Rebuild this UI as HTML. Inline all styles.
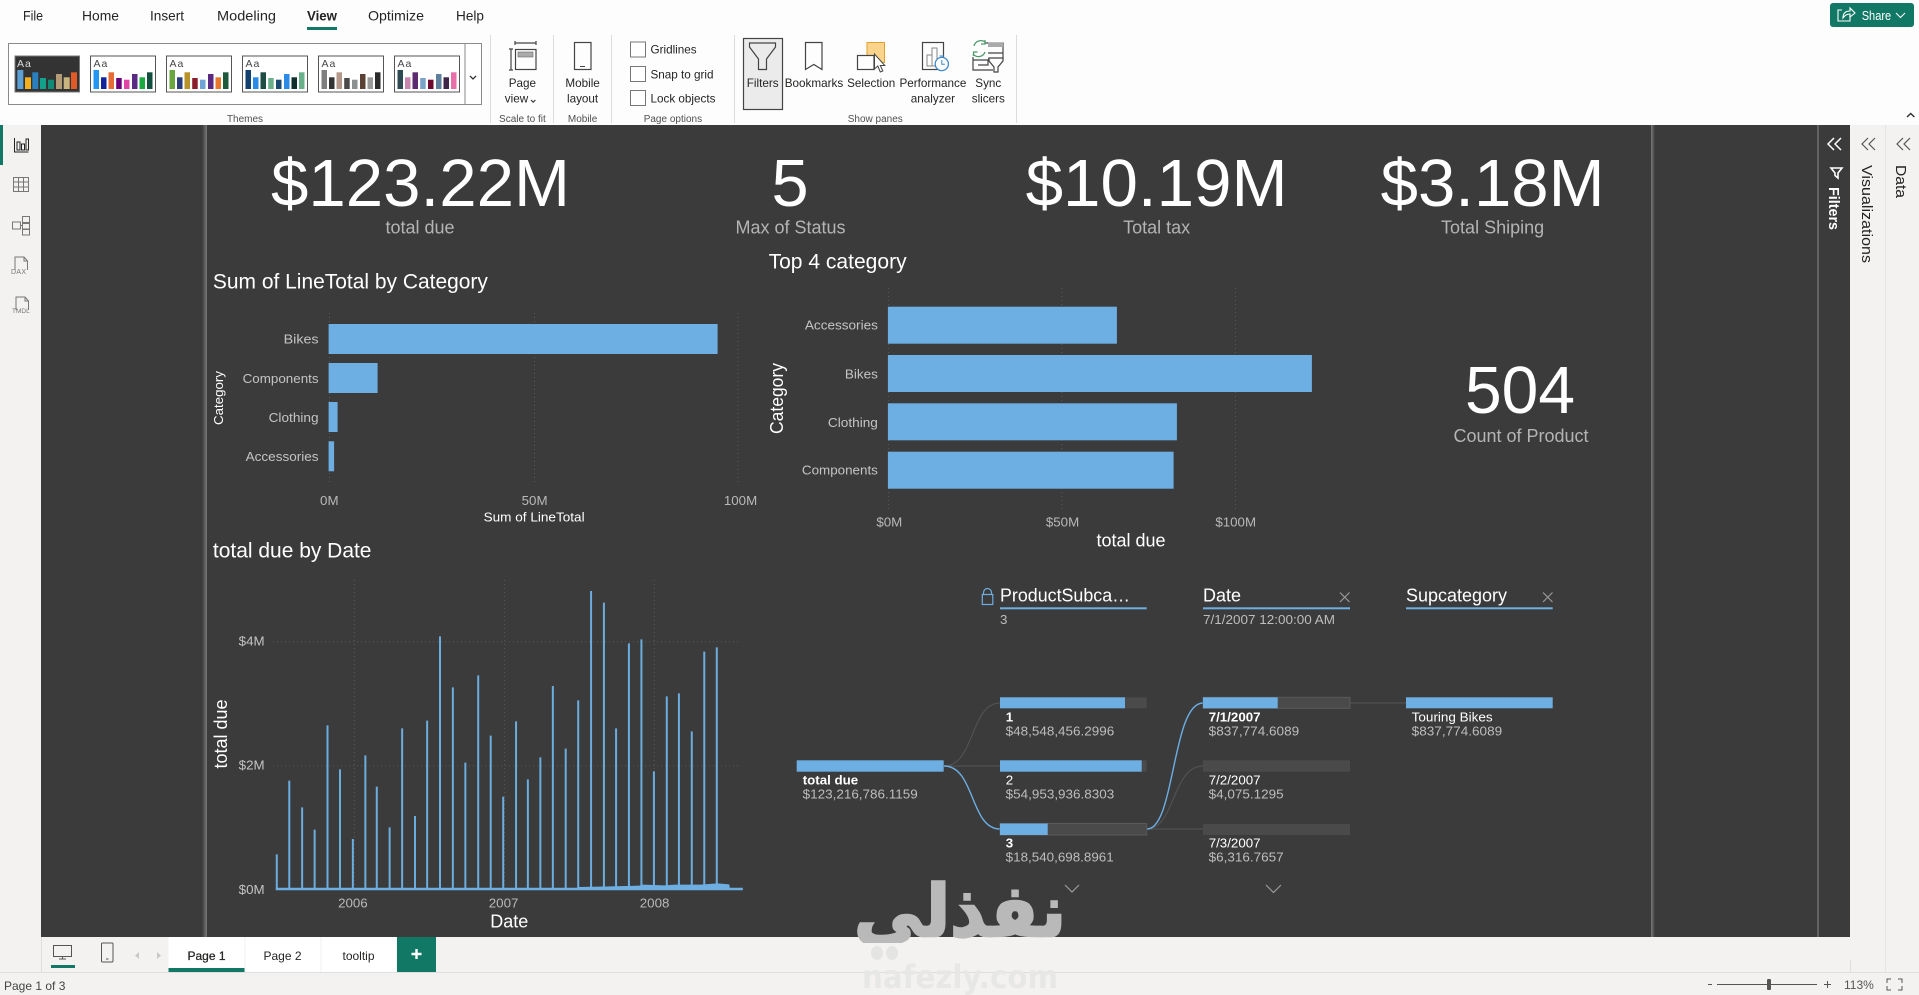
<!DOCTYPE html>
<html lang="en">
<head>
<meta charset="utf-8">
<title>Power BI Desktop - View</title>
<style>
html,body{margin:0;padding:0;background:#f3f2f1;overflow:hidden}
svg{display:block;font-family:"Liberation Sans",sans-serif}
.tab{font-size:14px;fill:#252423}
.rb{font-size:11.7px;fill:#252423;text-anchor:middle}
.gr{font-size:10px;fill:#505050;text-anchor:middle}
.ck{font-size:11.7px;fill:#252423}
.aa{font-size:10.5px;letter-spacing:1px}
.kpi{font-size:66.7px;fill:#fff;text-anchor:middle}
.kl{font-size:18px;fill:#b4b4b4;text-anchor:middle}
.ttl{font-size:20.8px;fill:#fff}
.ax{font-size:13.33px;fill:#b9b9b9}
.axm{font-size:13.33px;fill:#b9b9b9;text-anchor:middle}
.axe{font-size:13.33px;fill:#c4c4c4;text-anchor:end}
.at{font-size:18px;fill:#fff;text-anchor:middle}
.dh{font-size:18px;fill:#fff}
.ds{font-size:13.33px;fill:#bdbdbd}
.db{font-size:13.33px;fill:#fff;font-weight:bold}
.dn{font-size:13.33px;fill:#fff}
.grid{stroke:#5a5a5a;stroke-width:1;stroke-dasharray:1 3;fill:none}
.ic{fill:none;stroke:#444;stroke-width:1.2}
.pg{font-size:12px;fill:#252423;text-anchor:middle}
</style>
</head>
<body>
<svg width="1919" height="995" viewBox="0 0 1919 995" xmlns="http://www.w3.org/2000/svg">
<defs>
<linearGradient id="band" x1="0" x2="1" y1="0" y2="0"><stop offset="0" stop-color="#3b3b3b"/><stop offset="1" stop-color="#7a7a7a"/></linearGradient>
<linearGradient id="band2" x1="0" x2="1" y1="0" y2="0"><stop offset="0" stop-color="#7a7a7a"/><stop offset="1" stop-color="#3b3b3b"/></linearGradient>
<clipPath id="wm"><rect x="840" y="870" width="240" height="73"/></clipPath>
</defs>

<!-- backgrounds -->
<rect width="1919" height="125" fill="#fdfdfd"/>
<rect y="125" width="1919" height="870" fill="#f3f2f1"/>
<rect x="41" y="125" width="1809" height="812" fill="#3b3b3b"/>
<rect x="202" y="125" width="5" height="812" fill="url(#band)"/>
<rect x="1651" y="125" width="4" height="812" fill="url(#band2)"/>
<rect x="1817.5" y="125" width="1" height="812" fill="#8a8a8a"/>
<rect x="1885" y="125" width="1" height="847" fill="#e4e4e4"/>

<!-- ribbon tabs -->
<text class="tab" x="23" y="20.5" textLength="20" lengthAdjust="spacingAndGlyphs">File</text>
<text class="tab" x="82" y="20.5" textLength="37" lengthAdjust="spacingAndGlyphs">Home</text>
<text class="tab" x="150" y="20.5" textLength="34" lengthAdjust="spacingAndGlyphs">Insert</text>
<text class="tab" x="217" y="20.5" textLength="59" lengthAdjust="spacingAndGlyphs">Modeling</text>
<text class="tab" x="307" y="20.5" textLength="30" lengthAdjust="spacingAndGlyphs" font-weight="bold">View</text>
<rect x="307" y="27" width="30" height="3" fill="#117865"/>
<text class="tab" x="368" y="20.5" textLength="56" lengthAdjust="spacingAndGlyphs">Optimize</text>
<text class="tab" x="456" y="20.5" textLength="28" lengthAdjust="spacingAndGlyphs">Help</text>

<!-- themes gallery -->
<rect x="8.5" y="43.5" width="473" height="61" fill="#fff" stroke="#8a8a8a"/>
<line x1="465" y1="44" x2="465" y2="104" stroke="#8a8a8a"/>
<path d="M470 76l3 3 3-3" fill="none" stroke="#333" stroke-width="1.3"/>
<rect x="15" y="56" width="64.5" height="36" fill="#333" stroke="#777"/>
<text class="aa" x="17" y="67" fill="#ddd">Aa</text>
<g>
<rect x="17.3" y="70" width="6" height="19" fill="#5e9fd6"/><rect x="25" y="77.3" width="6" height="11.7" fill="#f2b01e"/><rect x="32.3" y="72.3" width="6" height="16.7" fill="#2a7fbe"/><rect x="40" y="78" width="6" height="11" fill="#12a28c"/><rect x="48" y="79.7" width="6" height="9.3" fill="#118a76"/><rect x="56" y="74" width="6" height="15" fill="#b49a76"/><rect x="63.7" y="77.3" width="6" height="11.7" fill="#c9b57e"/><rect x="71" y="72.3" width="6" height="16.7" fill="#e25a26"/>
</g>
<g transform="translate(90.5 0)"><rect x="0" y="56" width="65" height="36" fill="#fff" stroke="#555"/><text class="aa" x="3" y="67" fill="#444">Aa</text>
<rect x="3" y="70" width="5.5" height="19" fill="#2196f3"/><rect x="10.5" y="77.3" width="5.5" height="11.7" fill="#12239e"/><rect x="18" y="72.3" width="5.5" height="16.7" fill="#e66c37"/><rect x="25.7" y="78" width="5.5" height="11" fill="#6b007b"/><rect x="33.5" y="79.7" width="5.5" height="9.3" fill="#e044a7"/><rect x="41.5" y="74" width="5.5" height="15" fill="#5a2a82"/><rect x="49" y="77.3" width="5.5" height="11.7" fill="#1aab40"/><rect x="56.5" y="72.3" width="5.5" height="16.7" fill="#124f3f"/></g>
<g transform="translate(166.5 0)"><rect x="0" y="56" width="65" height="36" fill="#fff" stroke="#555"/><text class="aa" x="3" y="67" fill="#444">Aa</text>
<rect x="3" y="70" width="5.5" height="19" fill="#6aa83f"/><rect x="10.5" y="77.3" width="5.5" height="11.7" fill="#2a3c7a"/><rect x="18" y="72.3" width="5.5" height="16.7" fill="#b9932a"/><rect x="25.7" y="78" width="5.5" height="11" fill="#8a1f2b"/><rect x="33.5" y="79.7" width="5.5" height="9.3" fill="#6fa3d7"/><rect x="41.5" y="74" width="5.5" height="15" fill="#5a2a82"/><rect x="49" y="77.3" width="5.5" height="11.7" fill="#e8772e"/><rect x="56.5" y="72.3" width="5.5" height="16.7" fill="#1d5a3c"/></g>
<g transform="translate(242.5 0)"><rect x="0" y="56" width="65" height="36" fill="#fff" stroke="#555"/><text class="aa" x="3" y="67" fill="#444">Aa</text>
<rect x="3" y="70" width="5.5" height="19" fill="#12406f"/><rect x="10.5" y="77.3" width="5.5" height="11.7" fill="#2a8ae6"/><rect x="18" y="72.3" width="5.5" height="16.7" fill="#1d4d43"/><rect x="25.7" y="78" width="5.5" height="11" fill="#6ab08a"/><rect x="33.5" y="79.7" width="5.5" height="9.3" fill="#1a4a70"/><rect x="41.5" y="74" width="5.5" height="15" fill="#2a8ae6"/><rect x="49" y="77.3" width="5.5" height="11.7" fill="#0f2f2a"/><rect x="56.5" y="72.3" width="5.5" height="16.7" fill="#6ab08a"/></g>
<g transform="translate(318.5 0)"><rect x="0" y="56" width="65" height="36" fill="#fff" stroke="#555"/><text class="aa" x="3" y="67" fill="#444">Aa</text>
<rect x="3" y="70" width="5.5" height="19" fill="#7e7e7e"/><rect x="10.5" y="77.3" width="5.5" height="11.7" fill="#333"/><rect x="18" y="72.3" width="5.5" height="16.7" fill="#b4998a"/><rect x="25.7" y="78" width="5.5" height="11" fill="#4a4a4a"/><rect x="33.5" y="79.7" width="5.5" height="9.3" fill="#8c9090"/><rect x="41.5" y="74" width="5.5" height="15" fill="#5a4035"/><rect x="49" y="77.3" width="5.5" height="11.7" fill="#9a9a9a"/><rect x="56.5" y="72.3" width="5.5" height="16.7" fill="#2b2b2b"/></g>
<g transform="translate(394.5 0)"><rect x="0" y="56" width="65" height="36" fill="#fff" stroke="#555"/><text class="aa" x="3" y="67" fill="#444">Aa</text>
<rect x="3" y="70" width="5.5" height="19" fill="#2f4a52"/><rect x="10.5" y="77.3" width="5.5" height="11.7" fill="#c785b0"/><rect x="18" y="72.3" width="5.5" height="16.7" fill="#5c2a70"/><rect x="25.7" y="78" width="5.5" height="11" fill="#7aa3c7"/><rect x="33.5" y="79.7" width="5.5" height="9.3" fill="#6e0a2e"/><rect x="41.5" y="74" width="5.5" height="15" fill="#5f7f9f"/><rect x="49" y="77.3" width="5.5" height="11.7" fill="#3d2548"/><rect x="56.5" y="72.3" width="5.5" height="16.7" fill="#e86faa"/></g>
<text class="gr" x="245" y="122">Themes</text>

<!-- ribbon dividers -->
<g stroke="#dcdcdc"><line x1="490.5" y1="35" x2="490.5" y2="123"/><line x1="553.5" y1="35" x2="553.5" y2="123"/><line x1="611.5" y1="35" x2="611.5" y2="123"/><line x1="734.5" y1="35" x2="734.5" y2="123"/><line x1="1016.5" y1="35" x2="1016.5" y2="123"/></g>

<!-- page view -->
<path class="ic" d="M515 43h21M515 41v4M536 41v4M509 49h4M511 49v21M509 70h4"/>
<rect class="ic" x="515.5" y="49.5" width="20.5" height="20"/>
<rect x="518" y="52" width="15" height="5" fill="#aaa" stroke="#666" stroke-width=".6"/>
<text class="rb" x="522.4" y="87">Page</text><text class="rb" x="516.5" y="102.5">view</text>
<path d="M531 100l2.2 2.2 2.200-2.200" fill="none" stroke="#333" stroke-width="1.1"/>
<text class="gr" x="522.4" y="122">Scale to fit</text>

<!-- mobile layout -->
<rect class="ic" x="574.5" y="42.5" width="16.5" height="27"/>
<line x1="580" y1="66.5" x2="585" y2="66.5" stroke="#444"/>
<text class="rb" x="582.6" y="87">Mobile</text><text class="rb" x="582.6" y="102.500">layout</text>
<text class="gr" x="582.6" y="122">Mobile</text>

<!-- page options -->
<rect x="630.5" y="42" width="15" height="15" fill="#fff" stroke="#777"/>
<rect x="630.5" y="66.5" width="15" height="15" fill="#fff" stroke="#777"/>
<rect x="630.5" y="90.5" width="15" height="15" fill="#fff" stroke="#777"/>
<text class="ck" x="650.5" y="53.5">Gridlines</text>
<text class="ck" x="650.5" y="78.5">Snap to grid</text>
<text class="ck" x="650.5" y="102.5">Lock objects</text>
<text class="gr" x="672.9" y="122">Page options</text>

<!-- show panes -->
<rect x="743.5" y="38.5" width="39" height="71" fill="#ebebeb" stroke="#444" stroke-width="1.2"/>
<path class="ic" d="M749.5 43h26v4l-9 12v10.5h-8V59l-9-12z"/>
<text class="rb" x="762.7" y="87">Filters</text>
<path class="ic" d="M805.5 42.5h16.5v27l-8.2-5-8.3 5z"/>
<text class="rb" x="814" y="87">Bookmarks</text>
<rect x="867" y="42.5" width="17.5" height="20" fill="#fbd38b" stroke="#e0a030"/>
<rect x="857.5" y="55.5" width="16.5" height="14" fill="#fdfdfd" stroke="#444" stroke-width="1.2"/>
<path d="M874.5 54v15l3.3-3 2.5 6 2.5-1-2.5-5.5h4.5z" fill="#fff" stroke="#444"/>
<text class="rb" x="871.2" y="87">Selection</text>
<rect class="ic" x="922.5" y="42.5" width="21" height="27"/>
<rect x="927" y="55" width="5" height="11" fill="none" stroke="#888"/><rect x="932" y="48" width="5" height="18" fill="none" stroke="#888"/>
<circle cx="941.8" cy="64" r="6.6" fill="#fdfdfd" stroke="#3d88c8" stroke-width="1.3"/>
<path d="M941.8 60v4.3h3M939.5 56h4.6" fill="none" stroke="#3d88c8"/>
<text class="rb" x="932.9" y="87">Performance</text><text class="rb" x="932.9" y="102.500">analyzer</text>
<path class="ic" d="M985 43h18v10h-15M1003 53v6h-15M973 57v13h20M973 60h15v5h-10"/>
<rect x="988" y="42.5" width="15" height="4.5" fill="#aaa"/>
<path d="M974 46a7 7 0 0 1 12-3M985 52a7 7 0 0 1-12 2" fill="none" stroke="#4c9a6b" stroke-width="1.3"/>
<path d="M985 40v4h-4M973.500 56v-4h4" fill="none" stroke="#4c9a6b" stroke-width="1.2"/>
<path class="ic" d="M989 58h14v3l-5 6v5h-4v-5l-5-6z" style="fill:#fdfdfd"/>
<text class="rb" x="988.3" y="87">Sync</text><text class="rb" x="988.3" y="102.500">slicers</text>
<text class="gr" x="875.3" y="122">Show panes</text>

<!-- share -->
<rect x="1830" y="3" width="84" height="24" rx="3" fill="#117865"/>
<path d="M1850 15v6h-12v-11h4" fill="none" stroke="#fff" stroke-width="1.1"/>
<path d="M1843 18c0-5 3-7 7-7V8l5 5-5 4v-3c-3 0-5 1-7 4z" fill="none" stroke="#fff" stroke-width="1.1"/>
<text x="1861.7" y="20" font-size="13" fill="#fff" textLength="29.5" lengthAdjust="spacingAndGlyphs">Share</text>
<path d="M1896 13l4.500 4.500 4.500-4.500" fill="none" stroke="#fff" stroke-width="1.1"/>
<path d="M1907 117l3.700-3.500 3.700 3.500" fill="none" stroke="#333" stroke-width="1.5"/>

<!-- left rail -->
<rect x="0" y="125" width="3" height="40" fill="#117865"/>
<path d="M14.500 138v14h14M17 150v-8h3v8zM21.500 150v-6h3v6zM26 150v-11h2.500v11z" fill="none" stroke="#222" stroke-width="1"/>
<g fill="none" stroke="#777" stroke-width="1"><rect x="13.500" y="177.500" width="15" height="14"/><path d="M13.500 182h15M13.500 187h15M18.500 178v14M23.500 178v14"/>
<rect x="12.500" y="222" width="8" height="7"/><rect x="22.500" y="216.500" width="7" height="6"/><rect x="22.500" y="223.500" width="7" height="5.500"/><rect x="22.500" y="229.500" width="7" height="5.500"/><path d="M20.500 225.500h2"/>
<path d="M15 270v-13h9l3.500 4v9M24 257v4h3.500"/>
<path d="M16 310v-13h9l3.500 4v9M25 297v4h3.500"/></g>
<text x="11" y="274" font-size="7" fill="#777" letter-spacing=".3">DAX</text>
<text x="12" y="313" font-size="6.500" fill="#777">TMDL</text>

<!-- right panes -->
<path d="M1834 138l-6 6 6 6M1841 138l-6 6 6 6" fill="none" stroke="#fff" stroke-width="1.500"/>
<path d="M1831 168h11l-4 5v5l-3-2.500v-2.500z" fill="none" stroke="#fff" stroke-width="1.600"/>
<text transform="translate(1829 187) rotate(90)" font-size="14.500" fill="#fff" font-weight="bold" textLength="43" lengthAdjust="spacingAndGlyphs">Filters</text>
<path d="M1868 138l-6 6 6 6M1875 138l-6 6 6 6" fill="none" stroke="#555" stroke-width="1.200"/>
<text transform="translate(1862 165) rotate(90)" font-size="15" fill="#252423" textLength="98" lengthAdjust="spacingAndGlyphs">Visualizations</text>
<path d="M1903 138l-6 6 6 6M1910 138l-6 6 6 6" fill="none" stroke="#555" stroke-width="1.200"/>
<text transform="translate(1896 165) rotate(90)" font-size="15" fill="#252423" textLength="33" lengthAdjust="spacingAndGlyphs">Data</text>

<!-- KPI cards -->
<text class="kpi" x="420.500" y="206" textLength="299" lengthAdjust="spacingAndGlyphs">$123.22M</text>
<text class="kl" x="420" y="233.700">total due</text>
<text class="kpi" x="790" y="206">5</text>
<text class="kl" x="790.500" y="233.700">Max of Status</text>
<text class="kpi" x="1156.600" y="206" textLength="262" lengthAdjust="spacingAndGlyphs">$10.19M</text>
<text class="kl" x="1156.600" y="233.700">Total tax</text>
<text class="kpi" x="1492.600" y="206" textLength="224" lengthAdjust="spacingAndGlyphs">$3.18M</text>
<text class="kl" x="1492.600" y="233.700">Total Shiping</text>
<text class="kpi" x="1520" y="413" textLength="110" lengthAdjust="spacingAndGlyphs">504</text>
<text class="kl" x="1521" y="442">Count of Product</text>

<!-- chart 1 -->
<text class="ttl" x="212.900" y="288.300" textLength="275" lengthAdjust="spacingAndGlyphs">Sum of LineTotal by Category</text>
<path class="grid" d="M329.500 313v170M534.500 313v170M738 313v170"/>
<g fill="#6daee3"><rect x="328.600" y="324" width="389" height="30"/><rect x="328.600" y="363" width="49" height="30"/><rect x="328.600" y="402" width="9" height="30"/><rect x="328.600" y="441.300" width="5.500" height="30"/></g>
<text class="axe" x="318.600" y="343.500" textLength="35" lengthAdjust="spacingAndGlyphs">Bikes</text><text class="axe" x="318.600" y="382.800" textLength="76" lengthAdjust="spacingAndGlyphs">Components</text><text class="axe" x="318.600" y="421.800" textLength="50" lengthAdjust="spacingAndGlyphs">Clothing</text><text class="axe" x="318.600" y="460.800" textLength="73" lengthAdjust="spacingAndGlyphs">Accessories</text>
<text transform="translate(222.900 425) rotate(-90)" font-size="13.330" fill="#fff" textLength="54" lengthAdjust="spacingAndGlyphs">Category</text>
<text class="axm" x="329.300" y="505">0M</text><text class="axm" x="534.600" y="505">50M</text><text class="axm" x="740.500" y="505">100M</text>
<text x="483.600" y="521.700" font-size="13.330" fill="#fff" textLength="101" lengthAdjust="spacingAndGlyphs">Sum of LineTotal</text>

<!-- chart 2 -->
<text class="ttl" x="768.600" y="268.300" textLength="138" lengthAdjust="spacingAndGlyphs">Top 4 category</text>
<path class="grid" d="M888.600 288v222M1061.800 288v222M1235.400 288v222"/>
<g fill="#6daee3"><rect x="887.900" y="306.700" width="229" height="37"/><rect x="887.900" y="355" width="424" height="37"/><rect x="887.900" y="403.300" width="289" height="37"/><rect x="887.900" y="451.700" width="285.700" height="37"/></g>
<text class="axe" x="877.900" y="329.500" textLength="73" lengthAdjust="spacingAndGlyphs">Accessories</text><text class="axe" x="877.900" y="378.500" textLength="33" lengthAdjust="spacingAndGlyphs">Bikes</text><text class="axe" x="877.900" y="426.800" textLength="50" lengthAdjust="spacingAndGlyphs">Clothing</text><text class="axe" x="877.900" y="474.500" textLength="76" lengthAdjust="spacingAndGlyphs">Components</text>
<text transform="translate(782.900 434) rotate(-90)" font-size="18.500" fill="#fff" textLength="71" lengthAdjust="spacingAndGlyphs">Category</text>
<text class="axm" x="889.300" y="526.700">$0M</text><text class="axm" x="1062.500" y="526.700">$50M</text><text class="axm" x="1235.700" y="526.700">$100M</text>
<text class="at" x="1131" y="546.700">total due</text>

<!-- line chart -->
<text class="ttl" x="212.900" y="557.300" textLength="158.600" lengthAdjust="spacingAndGlyphs">total due by Date</text>
<path class="grid" d="M273 641.700H740M273 765.700H740M354.300 580V888M504.600 580V888M654.300 580V888"/>
<g transform="translate(200 540) scale(.35714 .33333)">
<path vector-effect="non-scaling-stroke" fill="none" stroke="#6cade0" stroke-width="2" d="M215 1046V943M250 1046V722M286 1046V802M321 1046V869M357 1046V556M392 1046V688M428 1046V897M463 1046V646M495 1046V740M531 1046V862M566 1046V565M602 1046V828M636 1046V542M672 1046V289M708 1046V442M743 1046V668M779 1046V406M814 1046V587M849 1046V770M885 1046V544M918 1046V718M953 1046V652M988 1046V438M1024 1046V626M1059 1046V481M1095 1046V153M1131 1046V188M1165 1046V565M1201 1046V310M1236 1046V298M1271 1046V694M1307 1046V469M1341 1046V460M1377 1046V574M1412 1046V335M1447 1046V322"/>
<path vector-effect="non-scaling-stroke" fill="none" stroke="#6daee3" stroke-width="2.500" d="M212 1047H1520"/>
<path fill="#6daee3" d="M1060 1047L1060 1041 1150 1039 1230 1037 1240 1034 1300 1036 1330 1034 1400 1034 1450 1030 1482 1033 1484 1047z"/>
</g>
<text class="axe" x="264.600" y="645.700">$4M</text><text class="axe" x="264.600" y="769.700">$2M</text><text class="axe" x="264.600" y="894">$0M</text>
<text class="axm" x="352.900" y="907.700">2006</text><text class="axm" x="503.600" y="907.700">2007</text><text class="axm" x="654.600" y="907.700">2008</text>
<text class="at" x="509.300" y="927.300">Date</text>
<text class="at" transform="translate(227 734) rotate(-90)">total due</text>

<!-- decomposition tree -->
<g fill="none" stroke-width="1">
<path stroke="#555" d="M944 766C975 766 970 703 1000 703M944 766H1000M1147 829C1175 829 1172 766 1203 766M1147 829H1203M1350 703H1406"/>
<path stroke="#6daee3" stroke-width="1.400" d="M944 766C975 766 970 829 1000 829M1147 829C1175 829 1172 703 1203 703"/>
</g>
<rect x="796.700" y="760.300" width="147" height="11.400" fill="#6daee3"/>
<text class="db" x="802.700" y="784.300">total due</text>
<text class="ds" x="802.700" y="798.700" textLength="115" lengthAdjust="spacingAndGlyphs">$123,216,786.1159</text>

<path d="M983.500 594.500v-2a4 4 0 0 1 8 0v2" fill="none" stroke="#6daee3" stroke-width="1.200"/>
<rect x="982.300" y="594.500" width="10.500" height="10" fill="none" stroke="#6daee3" stroke-width="1.200"/>
<text class="dh" x="1000" y="601.700" textLength="130" lengthAdjust="spacingAndGlyphs">ProductSubca…</text>
<rect x="1000" y="607.300" width="146.700" height="2" fill="#6daee3"/>
<text class="ds" x="1000" y="624">3</text>

<rect x="1000" y="697.300" width="146.700" height="11" fill="#4a4a4a"/><rect x="1000" y="697.300" width="125" height="11" fill="#6daee3"/>
<text class="db" x="1005.700" y="721.700">1</text><text class="ds" x="1005.700" y="735.700" textLength="108.500" lengthAdjust="spacingAndGlyphs">$48,548,456.2996</text>
<rect x="1000" y="760.300" width="146.700" height="11.400" fill="#4a4a4a"/><rect x="1000" y="760.300" width="141.700" height="11.400" fill="#6daee3"/>
<text class="dn" x="1005.700" y="784.300">2</text><text class="ds" x="1005.700" y="798.700" textLength="108.500" lengthAdjust="spacingAndGlyphs">$54,953,936.8303</text>
<rect x="1000" y="823.500" width="146.700" height="11.500" fill="#4a4a4a" stroke="#5a5a5a"/><rect x="1000" y="823.500" width="47.700" height="11.500" fill="#6daee3"/>
<text class="db" x="1005.700" y="847.700">3</text><text class="ds" x="1005.700" y="861.700" textLength="108" lengthAdjust="spacingAndGlyphs">$18,540,698.8961</text>

<text class="dh" x="1203" y="601.700" textLength="38" lengthAdjust="spacingAndGlyphs">Date</text>
<rect x="1203" y="607.300" width="147" height="2" fill="#6daee3"/>
<text class="ds" x="1203" y="624" textLength="132" lengthAdjust="spacingAndGlyphs">7/1/2007 12:00:00 AM</text>
<path d="M1340 592.500l9.500 9.500M1349.500 592.500l-9.500 9.500" stroke="#9a9a9a" stroke-width="1.200"/>

<rect x="1203" y="697.300" width="147" height="11" fill="#4a4a4a" stroke="#5a5a5a"/><rect x="1203" y="697.300" width="74.700" height="11" fill="#6daee3"/>
<text class="db" x="1208.700" y="721.700">7/1/2007</text><text class="ds" x="1208.700" y="735.700" textLength="90.500" lengthAdjust="spacingAndGlyphs">$837,774.6089</text>
<rect x="1203" y="760.300" width="147" height="11.400" fill="#4a4a4a"/>
<text class="dn" x="1208.700" y="784.300">7/2/2007</text><text class="ds" x="1208.700" y="798.700" textLength="75" lengthAdjust="spacingAndGlyphs">$4,075.1295</text>
<rect x="1203" y="824" width="147" height="11" fill="#4a4a4a"/>
<text class="dn" x="1208.700" y="847.700">7/3/2007</text><text class="ds" x="1208.700" y="861.700" textLength="75" lengthAdjust="spacingAndGlyphs">$6,316.7657</text>

<text class="dh" x="1406" y="601.700" textLength="101" lengthAdjust="spacingAndGlyphs">Supcategory</text>
<rect x="1406" y="607.300" width="146.700" height="2" fill="#6daee3"/>
<path d="M1543 592.500l9.500 9.500M1552.500 592.500l-9.500 9.500" stroke="#9a9a9a" stroke-width="1.200"/>
<rect x="1406" y="697.300" width="146.700" height="11" fill="#6daee3"/>
<text class="dn" x="1411.700" y="721.700" textLength="81" lengthAdjust="spacingAndGlyphs">Touring Bikes</text><text class="ds" x="1411.700" y="735.700" textLength="90.500" lengthAdjust="spacingAndGlyphs">$837,774.6089</text>

<path d="M1065 885l7 7 7-7M1266 885l7.500 7.500 7.500-7.500" fill="none" stroke="#9a9a9a" stroke-width="1.200"/>

<!-- bottom tab bar -->
<rect x="41" y="937" width="1809" height="35" fill="#f3f2f1"/>
<rect x="0" y="972" width="1919" height="1" fill="#dedede"/>
<rect x="41" y="937" width="1" height="35" fill="#dedede"/>
<rect x="53.500" y="945.500" width="18" height="11" fill="none" stroke="#555"/><path d="M59 959h7M62.500 957v2" stroke="#555"/>
<rect x="51" y="965" width="24" height="3" fill="#117865"/>
<rect x="101.500" y="943" width="11.500" height="19" rx="1" fill="none" stroke="#555"/><line x1="106" y1="959" x2="108.500" y2="959" stroke="#555"/>
<path d="M139 952l-4 3.500 4 3.500zM157 952l4 3.500-4 3.500z" fill="#c8c8c8"/>
<rect x="168.500" y="937" width="76" height="35" fill="#fff"/>
<rect x="245.500" y="937" width="75" height="35" fill="#fff"/>
<rect x="321.500" y="937" width="75" height="35" fill="#fff"/>
<rect x="168.500" y="968" width="76" height="4" fill="#117865"/>
<rect x="397" y="937" width="39" height="35" fill="#117865"/>
<path d="M416.500 949v10M411.500 954h10" stroke="#fff" stroke-width="2.400"/>
<text class="pg" x="206.500" y="960" stroke="#252423" stroke-width=".25">Page 1</text><text class="pg" x="282.500" y="960">Page 2</text><text class="pg" x="358.500" y="960">tooltip</text>

<!-- status bar -->
<text x="4" y="990" font-size="12" fill="#444">Page 1 of 3</text>
<line x1="1850.500" y1="960" x2="1850.500" y2="972" stroke="#dedede"/>
<path d="M1708 984.500h4M1824 984.500h7M1827.500 981v7" stroke="#555" stroke-width="1"/>
<line x1="1717" y1="984.500" x2="1817" y2="984.500" stroke="#555"/>
<rect x="1767" y="979" width="4" height="11" rx="1" fill="#555"/>
<text x="1844" y="989" font-size="12" fill="#555">113%</text>
<path d="M1887 983v-4h4M1898 979h4v4M1902 986v4h-4M1891 990h-4v-4" fill="none" stroke="#555"/>

<!-- watermark -->
<g clip-path="url(#wm)"><text x="960" y="936" text-anchor="middle" font-family="'DejaVu Sans',sans-serif" font-weight="bold" font-size="72" fill="#b9b9b9" stroke="#b9b9b9" stroke-width="2.500" textLength="212" lengthAdjust="spacingAndGlyphs">نفذلى</text></g>
<ellipse cx="877" cy="953" rx="6" ry="7" fill="#e4e4e2"/><ellipse cx="892" cy="953" rx="6" ry="7" fill="#e4e4e2"/>
<text x="960" y="988" text-anchor="middle" font-family="'DejaVu Sans',sans-serif" font-weight="bold" font-size="32" fill="#e7e7e5" textLength="196" lengthAdjust="spacingAndGlyphs">nafezly.com</text>
</svg>
</body>
</html>
